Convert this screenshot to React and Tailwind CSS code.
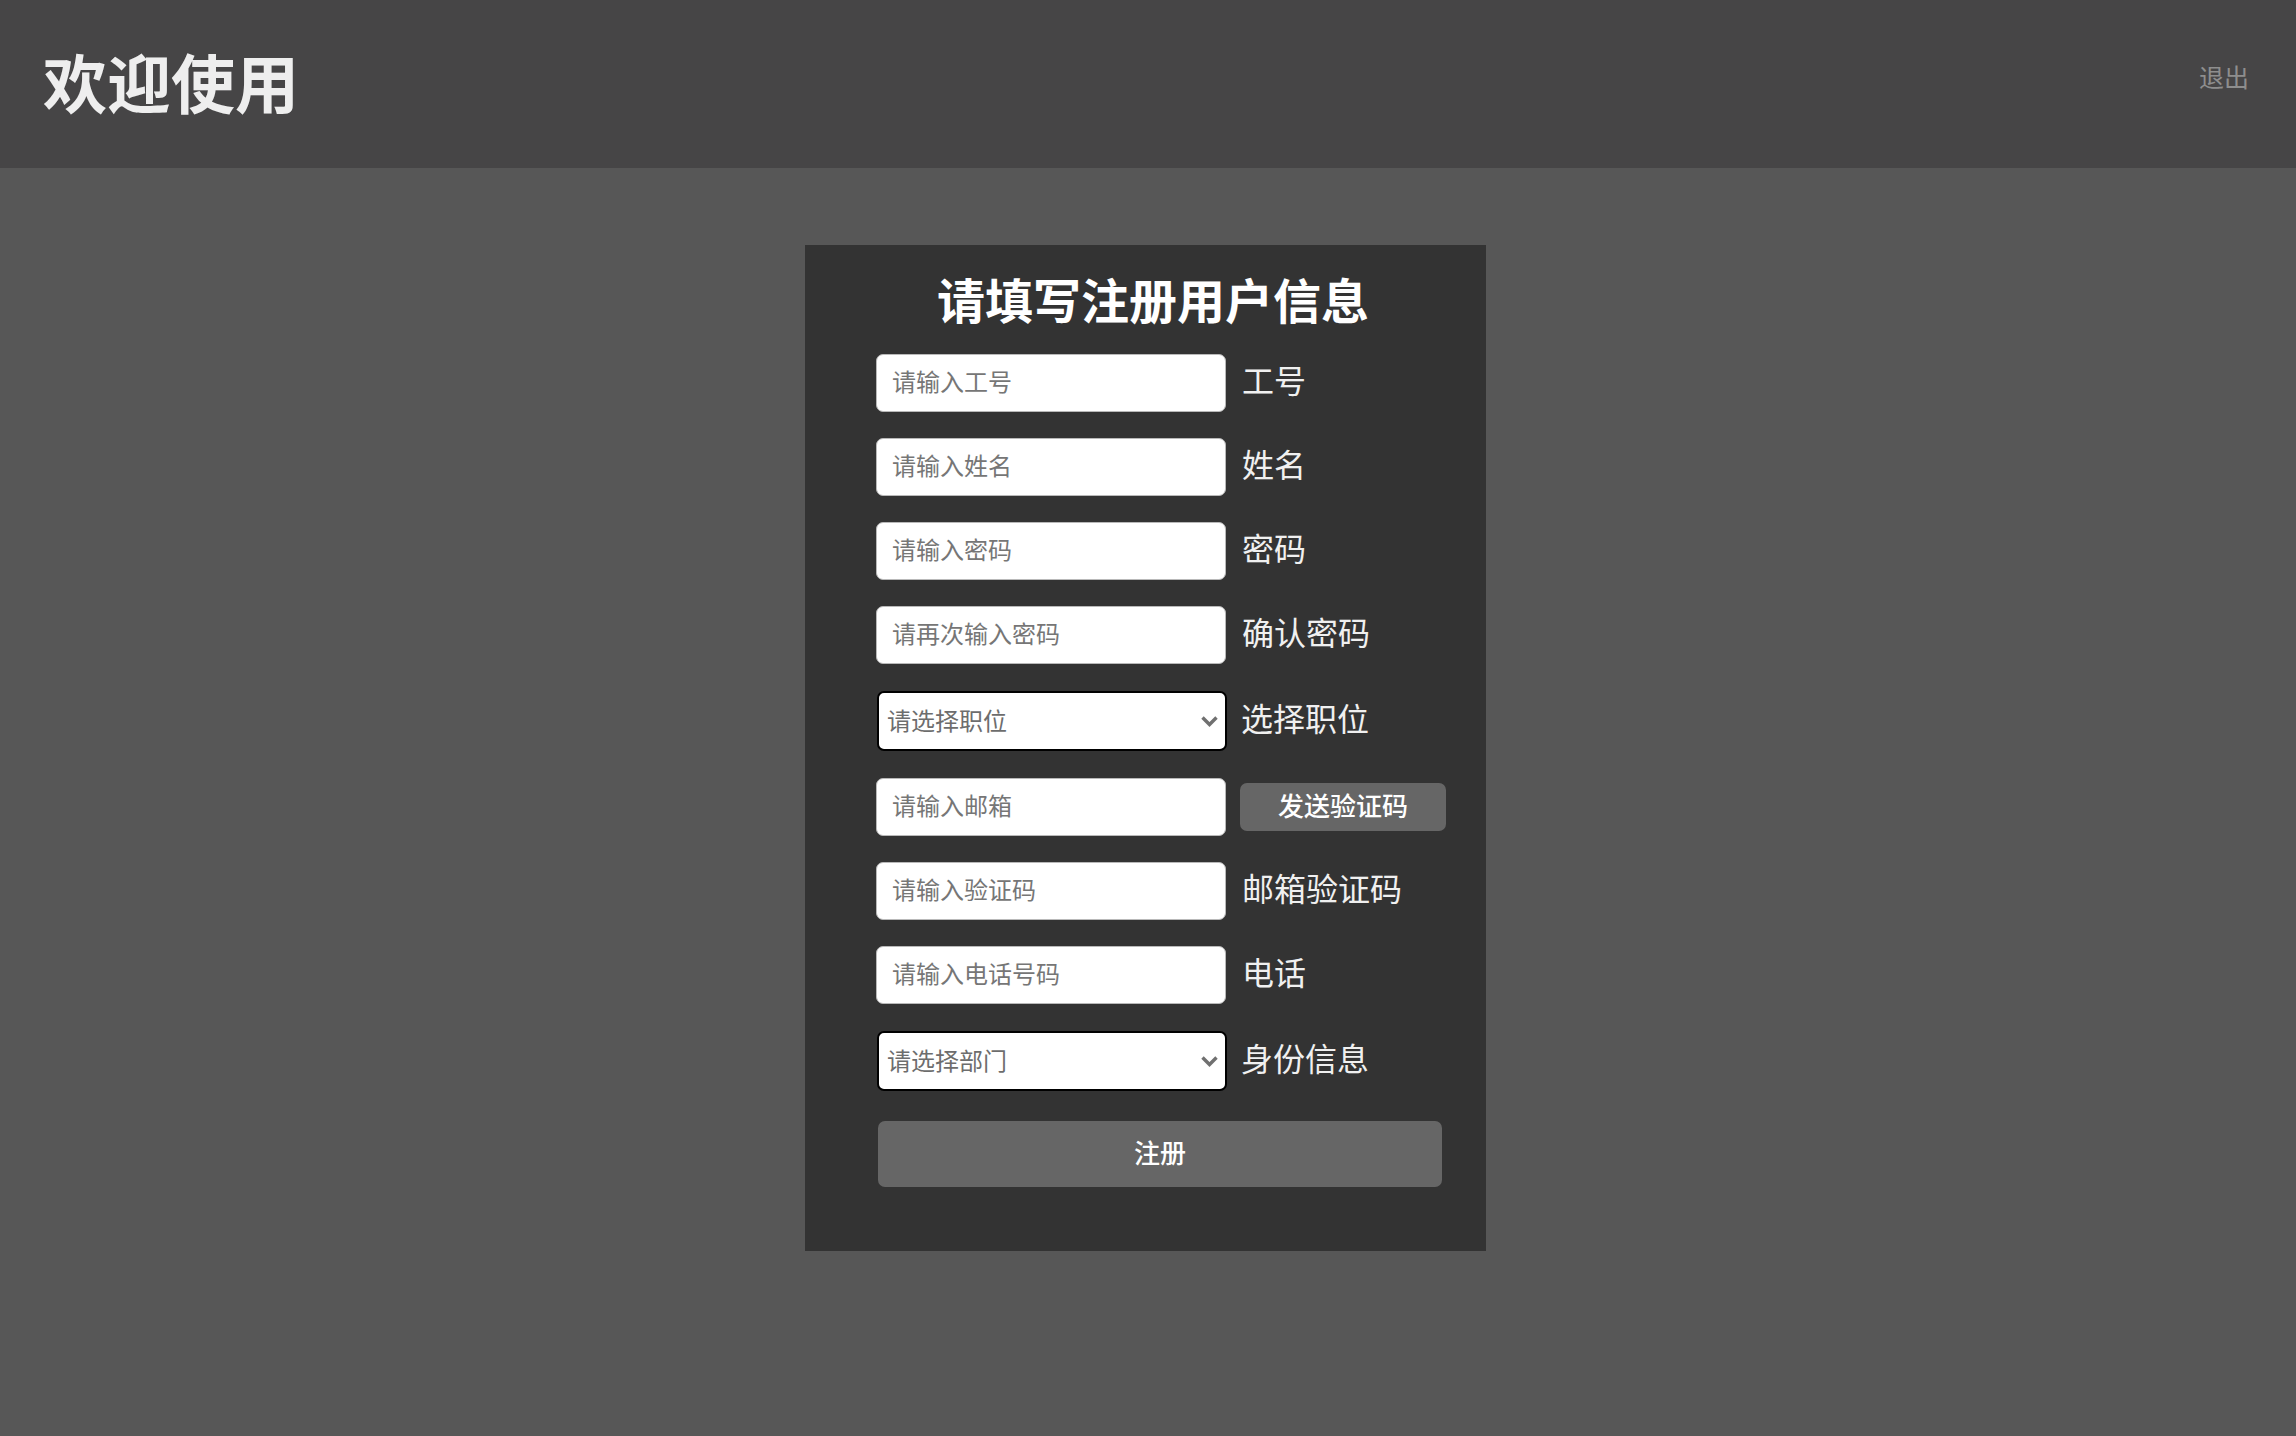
import React, { useState } from "react";

const FIELDS = [
  { type: "input", placeholder: "请输入工号", label: "工号" },
  { type: "input", placeholder: "请输入姓名", label: "姓名" },
  { type: "input", placeholder: "请输入密码", label: "密码", inputType: "password" },
  { type: "input", placeholder: "请再次输入密码", label: "确认密码", inputType: "password" },
  { type: "select", placeholder: "请选择职位", label: "选择职位", options: ["员工", "经理", "主管"] },
  { type: "email", placeholder: "请输入邮箱" },
  { type: "input", placeholder: "请输入验证码", label: "邮箱验证码" },
  { type: "input", placeholder: "请输入电话号码", label: "电话" },
  { type: "select", placeholder: "请选择部门", label: "身份信息", options: ["技术部", "人事部", "财务部"] },
];

const Chevron = () => (
  <svg
    className="pointer-events-none absolute right-[8px] top-1/2 -translate-y-1/2"
    width="19"
    height="12"
    viewBox="0 0 19 12"
    fill="none"
  >
    <path d="M2.5 2.5 L9.5 9.5 L16.5 2.5" stroke="#707070" strokeWidth="3.4" />
  </svg>
);

const TextInput = ({ placeholder, inputType = "text" }) => (
  <input
    type={inputType}
    placeholder={placeholder}
    className="w-[350px] h-[58px] bg-white border border-[#b9b9b9] rounded-[7px] pl-[15px] pb-[6px] text-[24px] text-[#333] placeholder:text-[#767676] outline-none"
  />
);

const SelectInput = ({ placeholder, options }) => (
  <div className="relative w-[350px] h-[60px] ml-[1px]">
    <select
      defaultValue=""
      className="appearance-none w-full h-full bg-white border-2 border-black rounded-[7px] pl-[8px] pb-[2px] text-[24px] text-[#6d6d6d] outline-none"
    >
      <option value="" disabled>
        {placeholder}
      </option>
      {options.map((o) => (
        <option key={o} value={o}>
          {o}
        </option>
      ))}
    </select>
    <Chevron />
  </div>
);

export default function App() {
  const [sent, setSent] = useState(false);

  return (
    <div
      className="min-h-screen bg-[#575757]"
      style={{ fontFamily: '"Noto Sans CJK SC", "Noto Sans", sans-serif' }}
    >
      {/* Header */}
      <header className="h-[168px] bg-[#464546] flex items-center justify-between pl-[43px] pr-[47px]">
        <h1 className="text-[64px] font-bold text-[#eeeeee] leading-none mb-[8px]">欢迎使用</h1>
        <button className="text-[25px] text-[#8e8e8e] leading-none mb-[16px]">退出</button>
      </header>

      {/* Register card */}
      <div className="pt-[77px] flex justify-center pr-[5px]">
        <div className="w-[681px] bg-[#333333] pt-[21px] pb-[64px]">
          <h2 className="text-center pl-[15px] text-[48px] leading-[64px] font-bold text-white">
            请填写注册用户信息
          </h2>

          <div className="mt-[24px] pl-[71px] flex flex-col gap-[26px]">
            {FIELDS.map((f) => {
              if (f.type === "select") {
                return (
                  <div key={f.placeholder} className="h-[62px] flex items-center gap-[14px]">
                    <SelectInput placeholder={f.placeholder} options={f.options} />
                    <span className="text-[32px] text-[#f0f0f0] leading-none pb-[8px]">{f.label}</span>
                  </div>
                );
              }
              if (f.type === "email") {
                return (
                  <div key={f.placeholder} className="h-[58px] flex items-center gap-[14px]">
                    <TextInput placeholder={f.placeholder} inputType="email" />
                    <button
                      onClick={() => setSent(true)}
                      className="w-[206px] h-[48px] bg-[#666666] rounded-[7px] pb-[5px] text-[26px] font-medium text-white leading-none"
                    >
                      {sent ? "已发送" : "发送验证码"}
                    </button>
                  </div>
                );
              }
              return (
                <div key={f.placeholder} className="h-[58px] flex items-center gap-[16px]">
                  <TextInput placeholder={f.placeholder} inputType={f.inputType} />
                  <span className="text-[32px] text-[#f0f0f0] leading-none pb-[8px]">{f.label}</span>
                </div>
              );
            })}

            <button className="mt-[3px] ml-[2px] w-[564px] h-[66px] bg-[#666666] rounded-[7px] pb-[5px] text-[26px] font-medium text-white">
              注册
            </button>
          </div>
        </div>
      </div>
    </div>
  );
}
